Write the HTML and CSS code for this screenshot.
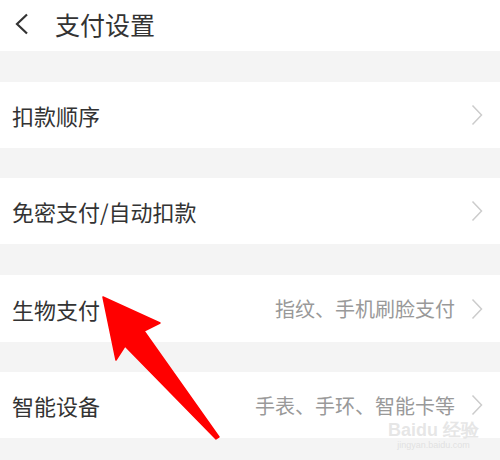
FILE: index.html
```html
<!DOCTYPE html>
<html lang="zh">
<head>
<meta charset="utf-8">
<link rel="stylesheet" href="styles.css">
</head>
<body>
<div class="page">
  <header class="topbar">
    <svg class="back" width="16" height="22" viewBox="0 0 16 22"><path d="M13 1.5 L3 11 L13 20.5" fill="none" stroke="#333" stroke-width="2.2"/></svg>
    <span class="title">支付设置</span>
  </header>
  <div class="list">
    <div class="row"><span class="label">扣款顺序</span><span class="right"><svg class="chev" width="12" height="22" viewBox="0 0 12 22"><path d="M1.5 1.5 L10.5 11 L1.5 20.5" fill="none" stroke="#cccccc" stroke-width="1.5"/></svg></span></div>
    <div class="row"><span class="label">免密支付/自动扣款</span><span class="right"><svg class="chev" width="12" height="22" viewBox="0 0 12 22"><path d="M1.5 1.5 L10.5 11 L1.5 20.5" fill="none" stroke="#cccccc" stroke-width="1.5"/></svg></span></div>
    <div class="row tall"><span class="label">生物支付</span><span class="right"><span class="hint">指纹、手机刷脸支付</span><svg class="chev" width="12" height="22" viewBox="0 0 12 22"><path d="M1.5 1.5 L10.5 11 L1.5 20.5" fill="none" stroke="#cccccc" stroke-width="1.5"/></svg></span></div>
    <div class="row"><span class="label">智能设备</span><span class="right"><span class="hint">手表、手环、智能卡等</span><svg class="chev" width="12" height="22" viewBox="0 0 12 22"><path d="M1.5 1.5 L10.5 11 L1.5 20.5" fill="none" stroke="#cccccc" stroke-width="1.5"/></svg></span></div>
  </div>
  <svg class="arrow" width="500" height="460" viewBox="0 0 500 460"><path d="M103 297 L160 323 L144 331 L219 437 L216 439 L125 346 L116 360 Z" fill="#ff0000" stroke="#ff0000" stroke-width="1.5" stroke-linejoin="round"/></svg>
  <div class="watermark"><span class="wm1">Bai<span class="paw">du</span> 经验</span><span class="wm2">jingyan.baidu.com</span></div>
</div>
</body>
</html>
```
FILE: styles.css
```css
* { box-sizing: border-box; }
html, body { margin: 0; padding: 0; }
body {
  width: 500px;
  height: 460px;
  overflow: hidden;
  background: #f4f4f4;
  font-family: "Noto Sans CJK SC", "Noto Sans", sans-serif;
  color: #333;
}
.page { position: relative; width: 500px; height: 460px; }
.topbar {
  height: 51px;
  background: #fff;
  display: flex;
  align-items: center;
  padding-left: 14px;
  padding-bottom: 4px;
}
.back { margin-right: 25px; }
.title { font-size: 25px; color: #333; }
.list { display: flex; flex-direction: column; padding-top: 31px; gap: 30px; }
.row {
  height: 66px;
  background: #fff;
  display: flex;
  align-items: center;
  justify-content: space-between;
  padding: 0 17px 0 12px;
}
.row.tall { height: 67px; margin-top: 1px; }
.label { font-size: 22px; color: #333; }
.right { display: flex; align-items: center; }
.hint { font-size: 20px; color: #999; margin-right: 16px; }
.chev { display: block; }
.arrow { position: absolute; left: 0; top: 0; pointer-events: none; }
.watermark {
  position: absolute;
  left: 388px;
  top: 421px;
  display: flex;
  flex-direction: column;
  align-items: center;
  color: rgba(205,205,205,0.5);
  line-height: 1;
}
.wm1 { font-family: "Liberation Sans", sans-serif; font-size: 18px; font-weight: bold; }
.wm2 { font-family: "Liberation Sans", sans-serif; font-size: 9px; margin-top: 2px; }
```
